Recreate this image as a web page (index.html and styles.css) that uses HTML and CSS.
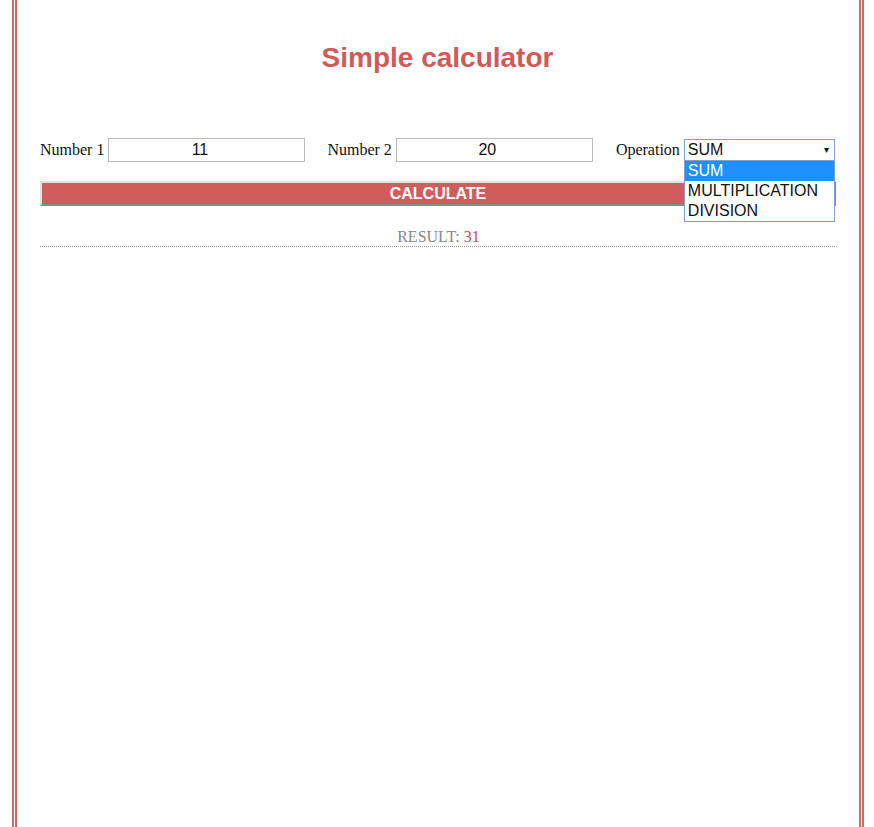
FILE: index.html
```html
<!DOCTYPE html>
<html>
<head>
<meta charset="utf-8">
<link rel="stylesheet" href="styles.css">
</head>
<body>
<div class="page">
  <h1 class="title">Simple calculator</h1>
  <div class="row">
    <div class="field f1">
      <span class="label">Number 1</span>
      <div class="input">11</div>
    </div>
    <div class="field f2">
      <span class="label">Number 2</span>
      <div class="input">20</div>
    </div>
    <div class="field f3">
      <span class="label">Operation</span>
      <div class="select">
        <span class="sel-text">SUM</span>
        <span class="arrow">&#9662;</span>
        <div class="options">
          <div class="opt active">SUM</div>
          <div class="opt">MULTIPLICATION</div>
          <div class="opt">DIVISION</div>
        </div>
      </div>
    </div>
  </div>
  <div class="button">CALCULATE</div>
  <div class="result">RESULT: <span class="value">31</span></div>
</div>
</body>
</html>
```
FILE: styles.css
```css
html, body {
  margin: 0;
  padding: 0;
  background: #ffffff;
}
.page {
  margin: 0 10px 0 12px;
  min-height: 827px;
  box-sizing: border-box;
  border-left: 5px double #d06666;
  border-right: 5px double #d06666;
  padding: 42px 22px 0 23px;
  font-family: "Liberation Serif", serif;
  font-size: 16px;
}
.title {
  margin: 0;
  text-align: center;
  font-family: "Liberation Sans", Arial, sans-serif;
  font-size: 28px;
  font-weight: bold;
  color: #d05a5a;
  line-height: 32px;
  height: 32px;
  padding-right: 2px;
}
.row {
  display: flex;
  align-items: flex-start;
  margin-top: 64px;
  height: 43px;
}
.field {
  display: flex;
  align-items: center;
}
.f2 { margin-left: 22px; }
.f3 { margin-left: 23px; }
.label {
  color: #111;
  margin-right: 4px;
  line-height: 24px;
}
.input {
  width: 181px;
  height: 22px;
  padding-right: 14px;
  border: 1px solid #b9b9b9;
  text-align: center;
  font-family: "Liberation Sans", Arial, sans-serif;
  font-size: 16px;
  line-height: 22px;
  color: #111;
}
.select {
  position: relative;
  width: 149px;
  height: 20px;
  border: 1px solid #7c9fd8;
  font-family: "Liberation Sans", Arial, sans-serif;
  font-size: 16px;
  line-height: 20px;
  color: #111;
  margin-top: -1px;
}
.sel-text { padding-left: 3px; }
.arrow {
  position: absolute;
  right: 5px;
  top: 0;
  font-size: 10px;
  line-height: 20px;
}
.options {
  position: absolute;
  left: -1px;
  top: 21px;
  width: 149px;
  border: 1px solid #7c9fd8;
  border-top: none;
  background: #fff;
  z-index: 5;
}
.opt {
  height: 20px;
  line-height: 20px;
  padding-left: 3px;
}
.opt.active {
  background: #1e90ff;
  color: #fff;
}
.button {
  height: 21px;
  border: 2px solid;
  border-color: #e8e0e0 #8a8a8a #8a8a8a #e8e0e0;
  background: #d05c5c;
  color: #fff;
  text-align: center;
  font-family: "Liberation Sans", Arial, sans-serif;
  font-size: 16px;
  font-weight: bold;
  line-height: 21px;
  width: 792px;
}
.result {
  margin-top: 21px;
  text-align: center;
  color: #888;
  line-height: 19px;
  border-bottom: 1px dotted #999;
}
.value { color: #c84a5e; }
```
